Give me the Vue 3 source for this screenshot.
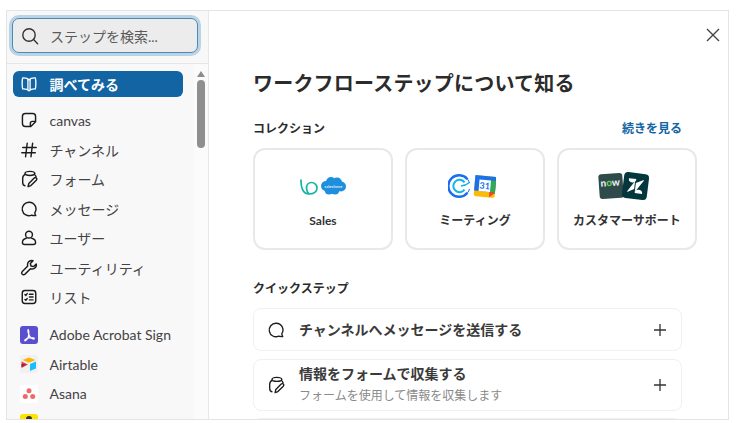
<template>
  <div class="page">
    <div class="modal">
      <aside class="sidebar">
        <div class="search-wrap">
          <div class="search">
            <svg class="search-icon" viewBox="0 0 18 18" width="18" height="18">
              <circle cx="8" cy="8" r="6.2" fill="none" stroke="#333" stroke-width="1.4" />
              <path d="M12.600 12.600l4 4.200" stroke="#333" stroke-width="1.4" stroke-linecap="round" />
            </svg>
            <span>ステップを検索...</span>
          </div>
        </div>
        <div class="list-area">
          <nav class="list">
            <div class="item active">
              <svg viewBox="0 0 20 20" width="18" height="18" fill="none" stroke="#fff" stroke-width="1.5" stroke-linejoin="round">
                <path d="M10 5.200C8.500 3.700 6 3 3 3.200c-.8 2-.8 10 0 12.300 3-.2 5.500.5 7 2 1.500-1.500 4-2.200 7-2 .8-2.300.8-10.300 0-12.300-3-.2-5.500.5-7 2zM8.800 5v12M11.200 5v12" />
              </svg>
              <span>調べてみる</span>
            </div>
            <div v-for="row in basics" :key="row.label" class="item">
              <svg viewBox="0 0 20 20" width="18" height="18" fill="none" stroke="#1d1c1d" stroke-width="1.6" stroke-linecap="round" stroke-linejoin="round" v-html="row.icon"></svg>
              <span>{{ row.label }}</span>
            </div>
            <div class="apps">
              <div class="item">
                <span class="app-icon adobe">
                  <svg viewBox="0 0 18 18" width="18" height="18" fill="none" stroke="#fff" stroke-width="1.200">
                    <path d="M8.300 3.600c-.6 0-.5 2.200.3 4.400.8 2.100 2.500 4.500 4.600 5 1.300.3 1.500-.9.200-1.200-2.500-.5-6.500.2-8.300 1.800-.9.800-.2 1.600.7.900 1.700-1.300 3.200-5.500 3-9.300-.1-.4-.2-.6-.5-.6z" />
                  </svg>
                </span>
                <span>Adobe Acrobat Sign</span>
              </div>
              <div class="item">
                <span class="app-icon airtable">
                  <svg viewBox="0 0 18 18" width="18" height="18">
                    <path d="M9 2.500L15.500 5 9 7.800 2.500 5z" fill="#fcb400" />
                    <path d="M10 9l6-2.400v7L10 16z" fill="#18bfff" />
                    <path d="M1.500 6.500L8 9.600 1.500 13z" fill="#e8384f" />
                    <path d="M1.500 9L6 9.500 1.500 12z" fill="#8a1f3c" />
                  </svg>
                </span>
                <span>Airtable</span>
              </div>
              <div class="item">
                <span class="app-icon asana">
                  <svg viewBox="0 0 18 18" width="18" height="18" fill="#f06a6a">
                    <circle cx="9" cy="5.800" r="2.500" />
                    <circle cx="5.300" cy="11.500" r="2.500" />
                    <circle cx="12.700" cy="11.500" r="2.500" />
                  </svg>
                </span>
                <span>Asana</span>
              </div>
              <div class="item">
                <span class="app-icon yellow">
                  <svg viewBox="0 0 18 18" width="18" height="18">
                    <circle cx="9" cy="5" r="3" fill="#333" />
                  </svg>
                </span>
                <span>Basecamp</span>
              </div>
            </div>
          </nav>
          <div class="scroll">
            <span class="scroll-up"></span>
            <span class="scroll-thumb"></span>
          </div>
        </div>
      </aside>

      <main class="main">
        <button class="close" aria-label="閉じる">
          <svg viewBox="0 0 14 14" width="14" height="14">
            <path d="M1 1l12 12M13 1L1 13" stroke="#444" stroke-width="1.400" />
          </svg>
        </button>
        <h1>ワークフローステップについて知る</h1>
        <div class="section-head">
          <h2>コレクション</h2>
          <a>続きを見る</a>
        </div>
        <div class="cards">
          <div class="card">
            <div class="logos">
              <svg viewBox="0 0 47 18" width="47" height="18">
                <path d="M1 3C1 9 2 17 9 17c5 0 8-2.500 8-6 0-3-2.500-5.500-5.500-5.500S6.500 8 6.500 11c0 3 1 4.500 2.500 6" fill="none" stroke="#17b3a6" stroke-width="1.700" stroke-linecap="round" />
                <g fill="#1e8fdc">
                  <circle cx="26" cy="9" r="5" />
                  <circle cx="31" cy="5" r="5" />
                  <circle cx="37" cy="5.500" r="5" />
                  <circle cx="41" cy="9.500" r="5" />
                  <circle cx="35" cy="13" r="4.500" />
                  <circle cx="29" cy="13" r="4.500" />
                </g>
                <text x="33.500" y="10.500" class="sf-text">salesforce</text>
              </svg>
            </div>
            <span>Sales</span>
          </div>
          <div class="card">
            <div class="logos shift-a">
              <svg viewBox="0 0 48 26" width="48" height="26">
                <path d="M19.500 6.200A10.800 10.800 0 1 0 19.500 19.800" fill="none" stroke="#1a6ef0" stroke-width="2.400" />
                <path d="M21.500 10A10.800 10.800 0 0 0 19.500 6.200M21.500 16A10.800 10.800 0 0 1 19.500 19.800" fill="none" stroke="#1a6ef0" stroke-width="1" />
                <path d="M16.500 9.300a6.200 6.200 0 1 0 0 7.400" fill="none" stroke="#12b5ea" stroke-width="2" />
                <path d="M13 13c3.500-.3 6-1.500 8.500-3.500" fill="none" stroke="#12b5ea" stroke-width="1.500" />
                <g transform="rotate(5 37 13)">
                  <rect x="26.500" y="3" width="21" height="21" rx="2" fill="#fbbc04" />
                  <rect x="26.500" y="3" width="21" height="15.500" fill="#1a73e8" />
                  <rect x="42" y="7" width="5.500" height="13" fill="#34a853" />
                  <path d="M42 24l5.500-5.500H42z" fill="#ea4335" />
                  <rect x="31" y="7" width="11.500" height="11.500" fill="#fff" />
                  <text x="36.700" y="16" class="cal-num">31</text>
                </g>
              </svg>
            </div>
            <span>ミーティング</span>
          </div>
          <div class="card">
            <div class="logos shift-b">
              <svg viewBox="0 0 54 30" width="54" height="30">
                <g transform="rotate(-4 14 15)">
                  <rect x="2" y="2.500" width="24" height="25" rx="3" fill="#2f4a4a" />
                  <text x="13.500" y="15" class="now-text">n<tspan fill="#62d84e">o</tspan>w</text>
                </g>
                <g transform="rotate(7 38 15)">
                  <rect x="26" y="2" width="25" height="26" rx="4" fill="#03363d" />
                  <path d="M31 8h7.500a3.750 3.750 0 0 1-7.500 0zM38.500 22h7.500a3.750 3.750 0 0 0-7.500 0zM46 8v1L38.500 21V12zM31 22v-1L37.500 10v8z" fill="#fff" />
                </g>
              </svg>
            </div>
            <span>カスタマーサポート</span>
          </div>
        </div>
        <h2 class="quick-title">クイックステップ</h2>
        <div class="quick">
          <div class="step">
            <svg viewBox="0 0 20 20" width="18" height="18" fill="none" stroke="#1d1c1d" stroke-width="1.500" stroke-linejoin="round">
              <path d="M10 2.500a7.500 7.500 0 1 0 2.900 14.400c1.500.5 3 .600 4.600.4-.700-1-1-2-1-3.200A7.500 7.500 0 0 0 10 2.500z" />
            </svg>
            <div class="step-text">
              <strong>チャンネルへメッセージを送信する</strong>
            </div>
            <svg class="plus" viewBox="0 0 12 12" width="12" height="12">
              <path d="M6 0v12M0 6h12" stroke="#333" stroke-width="1.300" />
            </svg>
          </div>
          <div class="step tall">
            <svg viewBox="0 0 20 20" width="18" height="18" fill="none" stroke="#1d1c1d" stroke-width="1.500" stroke-linecap="round" stroke-linejoin="round">
              <path d="M6 4.500C4 5.500 3 7 3 9v5c0 2 .8 3.300 2.500 3.500M16 5c1 .6 1.600 1.500 1.800 2.500M5.500 3.800c.5-3 10.500-3 11 0-.5 3-10.500 3-11 0zM9 18.500l.8-3.500 6-6c1.600-1.400 3.800.6 2.300 2.300l-6 6z" />
            </svg>
            <div class="step-text">
              <strong>情報をフォームで収集する</strong>
              <small>フォームを使用して情報を収集します</small>
            </div>
            <svg class="plus" viewBox="0 0 12 12" width="12" height="12">
              <path d="M6 0v12M0 6h12" stroke="#333" stroke-width="1.300" />
            </svg>
          </div>
          <div class="step"></div>
        </div>
      </main>
    </div>
  </div>
</template>

<script setup>
const basics = [
  {
    label: "canvas",
    icon: '<path d="M6 2.700h8c1.900 0 3.300 1.400 3.300 3.300v6l-5.300 5.300H6c-1.900 0-3.300-1.400-3.300-3.300V6c0-1.900 1.400-3.300 3.300-3.300zM17.300 11.500h-3.500c-1.300 0-2.300 1-2.300 2.300v3.500" />',
  },
  {
    label: "チャンネル",
    icon: '<path d="M3 7.200h15M2 13h15M8 2.500L6.200 17.500M14 2.500l-1.800 15" />',
  },
  {
    label: "フォーム",
    icon: '<path d="M6 4.500C4 5.500 3 7 3 9v5c0 2 .8 3.300 2.500 3.500M16 5c1 .6 1.600 1.500 1.800 2.500M5.500 3.800c.5-3 10.500-3 11 0-.5 3-10.500 3-11 0zM9 18.500l.8-3.500 6-6c1.600-1.400 3.800.6 2.300 2.300l-6 6z" />',
  },
  {
    label: "メッセージ",
    icon: '<path d="M10 2.500a7.500 7.500 0 1 0 2.900 14.400c1.500.5 3 .6 4.600.4-.7-1-1-2-1-3.200A7.500 7.500 0 0 0 10 2.500z" />',
  },
  {
    label: "ユーザー",
    icon: '<circle cx="10" cy="6.300" r="3.800" /><path d="M7 10.300c-2.500.7-4.300 2.500-4.300 4.700 0 1.500 1 2.300 2.500 2.300h9.600c1.500 0 2.500-.8 2.500-2.300 0-2.200-1.800-4-4.300-4.700" />',
  },
  {
    label: "ユーティリティ",
    icon: '<path d="M18 5.500l-3 3-2.800-.7-.7-2.800 3-3c-2.500-.8-5.300.4-6 3-.3 1-.2 2 .1 2.800l-6 6c-1 1-1 2.300-.1 3.100.9.900 2.200.9 3.100-.1l6-6c2.800 1 5.700-.3 6.500-3 .2-.7.200-1.500-.1-2.300z" />',
  },
  {
    label: "リスト",
    icon: '<rect x="2.500" y="2.800" width="15" height="14.500" rx="3" /><path d="M10.500 7h4M10.500 10h4M10.500 13.200h4M5.500 7.200l1 1 1.500-2M5.500 12.700l1 1 1.500-2" />',
  },
];
</script>

<style>
html,
body {
  margin: 0;
  background: #fff;
}
</style>

<style scoped>
.page {
  width: 737px;
  height: 423px;
  box-sizing: border-box;
  padding: 10px 8px 3px 6px;
  overflow: hidden;
  font-family: Lato, "Noto Sans CJK JP", sans-serif;
  color: #1d1c1d;
}

.modal {
  display: flex;
  height: 100%;
  box-sizing: border-box;
  border: 1px solid #e4e4e4;
  overflow: hidden;
}

.sidebar {
  display: flex;
  flex-direction: column;
  width: 202px;
  box-sizing: border-box;
  flex: none;
  background: #f8f8f8;
  border-right: 1px solid #e8e8e8;
}

.search-wrap {
  flex: none;
  height: 53px;
  box-sizing: border-box;
  padding: 7px 10px 0 5px;
  border-bottom: 1px solid #e6e6e6;
}

.search {
  display: flex;
  align-items: center;
  gap: 11px;
  height: 35px;
  box-sizing: border-box;
  padding-left: 8px;
  background: #ececec;
  border: 1px solid #4a8ab8;
  border-radius: 7px;
  box-shadow: 0 0 0 3px rgba(29, 120, 180, 0.28);
  font-size: 14px;
  color: #5a5a5a;
}

.search-icon {
  flex: none;
}

.list-area {
  display: flex;
  flex: 1;
  min-height: 0;
  overflow: hidden;
}

.list {
  flex: 1;
  min-width: 0;
  padding: 7px 11px 0 6px;
}

.item {
  display: flex;
  align-items: center;
  gap: 11.500px;
  height: 29.500px;
  padding-left: 7px;
  font-size: 14px;
  color: #454245;
  white-space: nowrap;
}

.item.active {
  height: 26px;
  margin-bottom: 8.500px;
  background: #1264a3;
  border-radius: 6px;
  color: #fff;
  font-weight: 700;
}

.item svg {
  flex: none;
}

.apps {
  margin-top: 8px;
}

.app-icon {
  display: block;
  flex: none;
  width: 18px;
  height: 18px;
  border-radius: 3px;
}

.adobe {
  background: #5a4fcf;
}

.airtable {
  background: #f1f1f1;
}

.asana {
  background: #fff;
}

.yellow {
  background: #fce300;
}

.scroll {
  display: flex;
  flex-direction: column;
  align-items: center;
  flex: none;
  width: 14px;
  padding-top: 7px;
  background: #fbfbfb;
}

.scroll-up {
  width: 0;
  height: 0;
  border-left: 4.500px solid transparent;
  border-right: 4.500px solid transparent;
  border-bottom: 6px solid #8c8c8c;
}

.scroll-thumb {
  width: 8px;
  height: 68px;
  margin-top: 3px;
  border-radius: 4px;
  background: #8f8f8f;
}

.main {
  position: relative;
  flex: 1;
  min-width: 0;
  padding: 58px 32px 0 44px;
  overflow: hidden;
}

.close {
  position: absolute;
  top: 17px;
  right: 8px;
  display: block;
  padding: 0;
  border: 0;
  background: none;
  line-height: 0;
}

h1 {
  margin: 0 0 23px;
  font-size: 20px;
  line-height: 28px;
  font-weight: 700;
  letter-spacing: 0.2px;
  color: #2b2b2b;
}

h2 {
  margin: 0;
  font-size: 12px;
  line-height: 18px;
  font-weight: 700;
  color: #2b2b2b;
}

.section-head {
  display: flex;
  align-items: center;
  justify-content: space-between;
  height: 18px;
  margin-right: 14px;
  margin-bottom: 10px;
}

.section-head a {
  font-size: 12px;
  line-height: 18px;
  font-weight: 700;
  color: #1264a3;
}

.cards {
  display: grid;
  grid-template-columns: repeat(3, 140px);
  gap: 12px;
}

.card {
  display: flex;
  flex-direction: column;
  align-items: center;
  height: 102px;
  box-sizing: border-box;
  padding-top: 20px;
  border: 2px solid #e8e8e8;
  border-radius: 12px;
  font-size: 12px;
  line-height: 18px;
  font-weight: 700;
  color: #333;
}

.logos {
  display: flex;
  align-items: center;
  justify-content: center;
  height: 32px;
  margin-bottom: 10px;
}

.shift-a {
  margin-right: 7px;
}

.shift-b {
  margin-right: 6px;
}

.sf-text {
  font-size: 4px;
  fill: #d8eefb;
  text-anchor: middle;
}

.cal-num {
  font-size: 9px;
  font-weight: 700;
  fill: #1a73e8;
  text-anchor: middle;
}

.now-text {
  font-size: 10px;
  font-weight: 900;
  fill: #e8efee;
  text-anchor: middle;
}

.quick-title {
  margin-top: 30px;
  margin-bottom: 10px;
}

.quick {
  display: flex;
  flex-direction: column;
  gap: 8px;
  margin-right: 14px;
}

.step {
  display: flex;
  align-items: center;
  gap: 14px;
  flex: none;
  height: 43px;
  box-sizing: border-box;
  padding: 0 15px 0 13px;
  border: 1px solid #f0f0f0;
  border-radius: 8px;
}

.step.tall {
  height: 52px;
  margin-bottom: -1px;
}

.step svg {
  flex: none;
}

.step-text {
  display: flex;
  flex-direction: column;
  flex: 1;
  min-width: 0;
}

.step-text strong {
  font-size: 14px;
  line-height: 22px;
  font-weight: 700;
  color: #3a3a3a;
}

.step-text small {
  font-size: 12px;
  line-height: 22px;
  color: #8a8a8a;
}
</style>
